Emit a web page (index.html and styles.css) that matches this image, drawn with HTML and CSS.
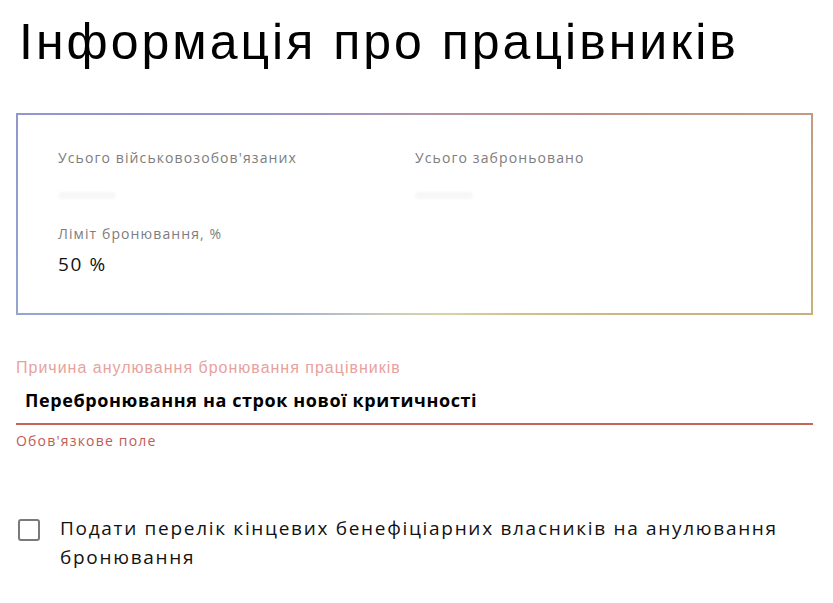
FILE: index.html
```html
<!DOCTYPE html>
<html lang="uk">
<head>
<meta charset="utf-8">
<title>Інформація про працівників</title>
<link rel="stylesheet" href="styles.css">
</head>
<body>
<main class="page">
  <h1 class="title">Інформація про працівників</h1>

  <section class="stats-frame">
    <div class="stats">
      <div class="stat">
        <div class="stat-label">Усього військовозобов'язаних</div>
        <div class="stat-hidden"></div>
      </div>
      <div class="stat">
        <div class="stat-label">Усього заброньовано</div>
        <div class="stat-hidden"></div>
      </div>
      <div class="stat">
        <div class="stat-label">Ліміт бронювання, %</div>
        <div class="stat-value">50 %</div>
      </div>
    </div>
  </section>

  <div class="field">
    <div class="field-label">Причина анулювання бронювання працівників</div>
    <div class="field-input">Переброню­вання на строк нової критичності</div>
    <div class="field-error">Обов'язкове поле</div>
  </div>

  <label class="check">
    <span class="check-box"></span>
    <span class="check-text">Подати перелік кінцевих бенефіціарних власників на анулювання бронювання</span>
  </label>
</main>
</body>
</html>
```

FILE: styles.css
```css
html, body {
  margin: 0;
  padding: 0;
  background: #ffffff;
}

.page {
  padding: 0 20px 0 16px;
  font-family: "Open Sans", "Noto Sans", sans-serif;
  color: #111;
}

.title {
  margin: 0;
  padding: 13px 0 0 3px;
  font-family: "Liberation Sans", Arial, sans-serif;
  font-weight: 400;
  font-size: 50px;
  line-height: 58px;
  letter-spacing: 3px;
  color: #000;
}

.stats-frame {
  margin-top: 42px;
  padding: 2px;
  background: conic-gradient(from 0deg,
    #b294ac 0deg,
    #bd8f86 60deg,
    #c7ae78 100deg,
    #d8d2a4 160deg,
    #c6ccc0 200deg,
    #96a8d0 250deg,
    #8f95cb 290deg,
    #a493c0 330deg,
    #b294ac 360deg);
}

.stats {
  background: #fff;
  display: grid;
  grid-template-columns: 357px 1fr;
  row-gap: 17px;
  padding: 34px 40px 28px 40px;
  min-height: 136px;
}

.stat-label {
  font-size: 14px;
  line-height: 18px;
  color: #7d7d7d;
  letter-spacing: 1.1px;
}

.stat-hidden {
  margin-top: 25px;
  width: 58px;
  height: 7px;
  border-radius: 4px;
  background: #f7f7f7;
  filter: blur(1px);
}

.stat-value {
  margin-top: 9px;
  font-size: 19px;
  line-height: 24px;
  letter-spacing: 1.6px;
  color: #111;
}

.field {
  margin-top: 43px;
}

.field-label {
  font-family: "Liberation Sans", Arial, sans-serif;
  font-size: 16px;
  line-height: 20px;
  color: #e8a29e;
  letter-spacing: 1px;
}

.field-input {
  box-sizing: border-box;
  height: 47px;
  padding: 10px 9px 0;
  font-family: "Open Sans", sans-serif;
  font-weight: 700;
  font-size: 18px;
  line-height: 24px;
  letter-spacing: 0.6px;
  color: #000;
  border-bottom: 2px solid #c9645d;
}

.field-error {
  margin-top: 7px;
  font-size: 14px;
  line-height: 18px;
  letter-spacing: 1.2px;
  color: #c05b55;
}

.check {
  margin-top: 64px;
  display: flex;
  align-items: flex-start;
  gap: 20px;
  padding-left: 2px;
}

.check-box {
  flex: none;
  width: 18px;
  height: 18px;
  margin-top: 5px;
  border: 2px solid #7a7a7a;
  border-radius: 3px;
}

.check-text {
  font-size: 19px;
  line-height: 29px;
  letter-spacing: 1.7px;
  color: #111;
  max-width: 740px;
}
```
